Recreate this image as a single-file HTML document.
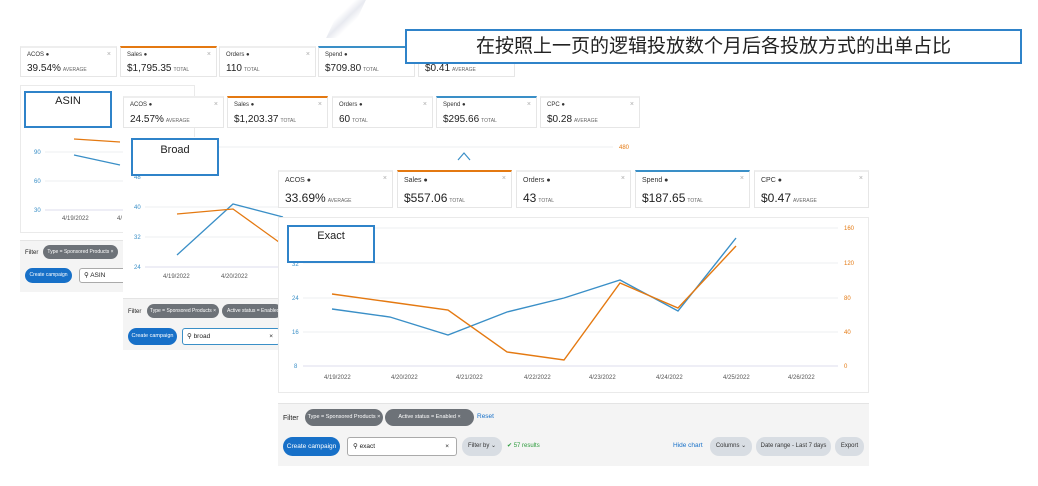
<!DOCTYPE html><html><head><meta charset="utf-8"><style>
*{box-sizing:border-box;margin:0;padding:0}
body{width:1038px;height:486px;background:#fff;position:relative;overflow:hidden;font-family:"Liberation Sans","Noto Sans CJK SC",sans-serif;color:#222}
.a{position:absolute}
.card{position:absolute;background:#fff;border:1px solid #e6e6e6;border-top:2px solid #eee}
.card .l{position:absolute;left:6px;top:4px;font-size:6px;color:#333}
.card .v{position:absolute;left:6px;font-size:10px;color:#222;white-space:nowrap}
.card .v small{font-size:5px;color:#666;margin-left:2px}
.card .x{position:absolute;right:5px;top:3px;font-size:7px;color:#aaa}
.or{border-top-color:#e47911}.bl{border-top-color:#3a8fc7}
.panel{position:absolute;background:#fff;border:1px solid #eaeaea}
.fp{position:absolute;background:#f4f4f4;border-top:1px solid #e4e4e4}
.chip{position:absolute;background:#6d7278;color:#fff;border-radius:9px;font-size:5.5px;white-space:nowrap;overflow:hidden;text-align:center}
.btn{position:absolute;background:#1770c8;color:#fff;border-radius:10px;font-size:6px;text-align:center;white-space:nowrap}
.srch{position:absolute;background:#fff;border:1px solid #aaa;border-radius:3px;font-size:6.5px}
.box{position:absolute;border:2px solid #2f83c9;background:#fff;font-size:11px;text-align:center;color:#222}
.gl{stroke:#eceff2;stroke-width:1}
.ax{font-size:6px;fill:#3a8fc7}.ar{font-size:6px;fill:#e47911}.dx{font-size:6px;fill:#555}
.g{background:#d8dde3;color:#333}
</style></head><body>
<div class="a" style="left:335px;top:0;width:22px;height:38px;background:linear-gradient(120deg,#fff 25%,#e8eaf0 50%,#fff 75%);transform:skewX(-25deg)"></div>

<!-- Layer 1 ASIN -->
<div class="card" style="left:20px;top:46px;width:97px;height:31px"><div class="l">ACOS ●</div><div class="x">×</div><div class="v" style="top:15px">39.54%<small>AVERAGE</small></div></div>
<div class="card or" style="left:120px;top:46px;width:97px;height:31px"><div class="l">Sales ●</div><div class="x">×</div><div class="v" style="top:15px">$1,795.35<small>TOTAL</small></div></div>
<div class="card" style="left:219px;top:46px;width:97px;height:31px"><div class="l">Orders ●</div><div class="x">×</div><div class="v" style="top:15px">110<small>TOTAL</small></div></div>
<div class="card bl" style="left:318px;top:46px;width:97px;height:31px"><div class="l">Spend ●</div><div class="v" style="top:15px">$709.80<small>TOTAL</small></div></div>
<div class="card" style="left:418px;top:46px;width:97px;height:31px"><div class="v" style="top:15px">$0.41<small>AVERAGE</small></div></div>
<div class="panel" style="left:20px;top:85px;width:175px;height:148px"></div>
<svg class="a" style="left:20px;top:85px" width="110" height="148"><line class="gl" x1="25" y1="67" x2="110" y2="67"/><line class="gl" x1="25" y1="96" x2="110" y2="96"/><line x1="25" y1="125" x2="110" y2="125" stroke="#dde"/>
<text class="ax" x="14" y="69">90</text><text class="ax" x="14" y="98">60</text><text class="ax" x="14" y="127">30</text>
<polyline points="54,70 100,80" fill="none" stroke="#3a8fc7" stroke-width="1.3"/><polyline points="54,54 100,57" fill="none" stroke="#e47911" stroke-width="1.3"/>
<text class="dx" x="42" y="135">4/19/2022</text><text class="dx" x="97" y="135">4/</text></svg>
<div class="fp" style="left:20px;top:240px;width:110px;height:52px"><div class="a" style="left:5px;top:9px;font-size:6px">Filter</div></div>
<div class="chip" style="left:43px;top:245px;line-height:14px;width:75px;font-size:5px">Type = Sponsored Products ×</div>
<div class="btn" style="left:25px;top:268px;width:47px;height:15px;line-height:15px;font-size:5px">Create campaign</div>
<div class="srch" style="left:79px;top:268px;width:50px;height:15px;line-height:13px;padding-left:4px">⚲ ASIN</div>

<!-- Layer 2 Broad -->
<div class="panel" style="left:123px;top:137px;width:517px;height:155px;border:none"></div>
<div class="card" style="left:123px;top:96px;width:101px;height:32px"><div class="l">ACOS ●</div><div class="x">×</div><div class="v" style="top:16px">24.57%<small>AVERAGE</small></div></div>
<div class="card or" style="left:227px;top:96px;width:101px;height:32px"><div class="l">Sales ●</div><div class="x">×</div><div class="v" style="top:16px">$1,203.37<small>TOTAL</small></div></div>
<div class="card" style="left:332px;top:96px;width:101px;height:32px"><div class="l">Orders ●</div><div class="x">×</div><div class="v" style="top:16px">60<small>TOTAL</small></div></div>
<div class="card bl" style="left:436px;top:96px;width:101px;height:32px"><div class="l">Spend ●</div><div class="x">×</div><div class="v" style="top:16px">$295.66<small>TOTAL</small></div></div>
<div class="card" style="left:540px;top:96px;width:100px;height:32px"><div class="l">CPC ●</div><div class="x">×</div><div class="v" style="top:16px">$0.28<small>AVERAGE</small></div></div>
<svg class="a" style="left:123px;top:137px" width="517" height="160"><line class="gl" x1="20" y1="10" x2="490" y2="10"/><text class="ar" x="496" y="12">480</text>
<polyline points="335,23 341,16 347,23" fill="none" stroke="#3a8fc7" stroke-width="1.2"/>
<line class="gl" x1="22" y1="70" x2="160" y2="70"/><line class="gl" x1="22" y1="100" x2="160" y2="100"/><line x1="22" y1="130" x2="160" y2="130" stroke="#dde"/>
<text class="ax" x="11" y="42">48</text><text class="ax" x="11" y="72">40</text><text class="ax" x="11" y="102">32</text><text class="ax" x="11" y="132">24</text>
<polyline points="54,118 110,67 160,80" fill="none" stroke="#3a8fc7" stroke-width="1.3"/><polyline points="54,77 110,72 160,108" fill="none" stroke="#e47911" stroke-width="1.3"/>
<text class="dx" x="40" y="141">4/19/2022</text><text class="dx" x="98" y="141">4/20/2022</text></svg>
<div class="fp" style="left:123px;top:298px;width:160px;height:52px"><div class="a" style="left:5px;top:10px;font-size:6px">Filter</div></div>
<div class="chip" style="left:147px;top:304px;line-height:14px;width:72px;font-size:5px">Type = Sponsored Products ×</div>
<div class="chip" style="left:222px;top:304px;line-height:14px;width:60px;font-size:5px;text-align:left;padding-left:5px">Active status = Enabled</div>
<div class="btn" style="left:128px;top:328px;width:49px;height:17px;line-height:17px;font-size:5.5px">Create campaign</div>
<div class="srch" style="left:182px;top:328px;width:98px;height:17px;line-height:15px;padding-left:4px;border-color:#3a8fc7">⚲ broad<span style="position:absolute;right:6px">×</span></div>

<!-- Layer 3 Exact -->
<div class="card" style="left:278px;top:170px;width:115px;height:38px"><div class="l" style="font-size:7px;top:5px">ACOS ●</div><div class="x">×</div><div class="v" style="top:19px;font-size:12px">33.69%<small>AVERAGE</small></div></div>
<div class="card or" style="left:397px;top:170px;width:115px;height:38px"><div class="l" style="font-size:7px;top:5px">Sales ●</div><div class="x">×</div><div class="v" style="top:19px;font-size:12px">$557.06<small>TOTAL</small></div></div>
<div class="card" style="left:516px;top:170px;width:115px;height:38px"><div class="l" style="font-size:7px;top:5px">Orders ●</div><div class="x">×</div><div class="v" style="top:19px;font-size:12px">43<small>TOTAL</small></div></div>
<div class="card bl" style="left:635px;top:170px;width:115px;height:38px"><div class="l" style="font-size:7px;top:5px">Spend ●</div><div class="x">×</div><div class="v" style="top:19px;font-size:12px">$187.65<small>TOTAL</small></div></div>
<div class="card" style="left:754px;top:170px;width:115px;height:38px"><div class="l" style="font-size:7px;top:5px">CPC ●</div><div class="x">×</div><div class="v" style="top:19px;font-size:12px">$0.47<small>AVERAGE</small></div></div>
<div class="panel" style="left:278px;top:217px;width:591px;height:176px"></div>
<svg class="a" style="left:278px;top:217px" width="591" height="176">
<line class="gl" x1="25" y1="11" x2="560" y2="11"/><line class="gl" x1="25" y1="46" x2="560" y2="46"/><line class="gl" x1="25" y1="81" x2="560" y2="81"/><line class="gl" x1="25" y1="115" x2="560" y2="115"/><line x1="25" y1="149" x2="560" y2="149" stroke="#dde"/>
<text class="ax" x="14" y="83">24</text><text class="ax" x="14" y="117">16</text><text class="ax" x="16" y="151">8</text><text class="ax" x="14" y="49">32</text>
<text class="ar" x="566" y="13">160</text><text class="ar" x="566" y="48">120</text><text class="ar" x="566" y="83">80</text><text class="ar" x="566" y="117">40</text><text class="ar" x="566" y="151">0</text>
<g class="dx"><text x="46" y="162">4/19/2022</text><text x="113" y="162">4/20/2022</text><text x="178" y="162">4/21/2022</text><text x="246" y="162">4/22/2022</text><text x="311" y="162">4/23/2022</text><text x="378" y="162">4/24/2022</text><text x="445" y="162">4/25/2022</text><text x="510" y="162">4/26/2022</text></g>
<polyline points="54,92 112,100 170,118 229,95 286,81 342,63 400,94 458,21" fill="none" stroke="#3a8fc7" stroke-width="1.4"/>
<polyline points="54,77 112,85 170,93 229,135 286,143 342,66 400,91 458,29" fill="none" stroke="#e47911" stroke-width="1.4"/>
</svg>
<div class="fp" style="left:278px;top:403px;width:591px;height:63px"><div class="a" style="left:5px;top:11px;font-size:7px">Filter</div></div>
<div class="chip" style="left:305px;top:409px;line-height:17px;width:78px">Type = Sponsored Products ×</div>
<div class="chip" style="left:385px;top:409px;line-height:17px;width:89px">Active status = Enabled ×</div>
<div class="a" style="left:477px;top:413px;font-size:6.5px;color:#1770c8">Reset</div>
<div class="btn" style="left:283px;top:437px;width:57px;height:19px;line-height:19px;font-size:6.5px">Create campaign</div>
<div class="srch" style="left:347px;top:437px;width:110px;height:19px;line-height:17px;padding-left:5px;font-size:6.5px">⚲ exact<span style="position:absolute;right:7px">×</span></div>
<div class="chip g" style="left:462px;top:437px;line-height:19px;width:40px;font-size:6px">Filter by ⌄</div>
<div class="a" style="left:507px;top:442px;font-size:6px;color:#2a9a3a">✔ 57 results</div>
<div class="a" style="left:673px;top:442px;font-size:6.5px;color:#1770c8">Hide chart</div>
<div class="chip g" style="left:710px;top:437px;line-height:19px;width:42px;font-size:6px">Columns ⌄</div>
<div class="chip g" style="left:756px;top:437px;line-height:19px;width:75px;font-size:6px">Date range - Last 7 days</div>
<div class="chip g" style="left:835px;top:437px;line-height:19px;width:29px;font-size:6px">Export</div>

<!-- Label boxes -->
<div class="box" style="left:405px;top:29px;width:617px;height:35px;font-size:19px;line-height:31px">在按照上一页的逻辑投放数个月后各投放方式的出单占比</div>
<div class="box" style="left:24px;top:91px;width:88px;height:37px;line-height:16px">ASIN</div>
<div class="box" style="left:131px;top:138px;width:88px;height:38px;line-height:20px">Broad</div>
<div class="box" style="left:287px;top:225px;width:88px;height:38px;line-height:18px">Exact</div>
</body></html>
